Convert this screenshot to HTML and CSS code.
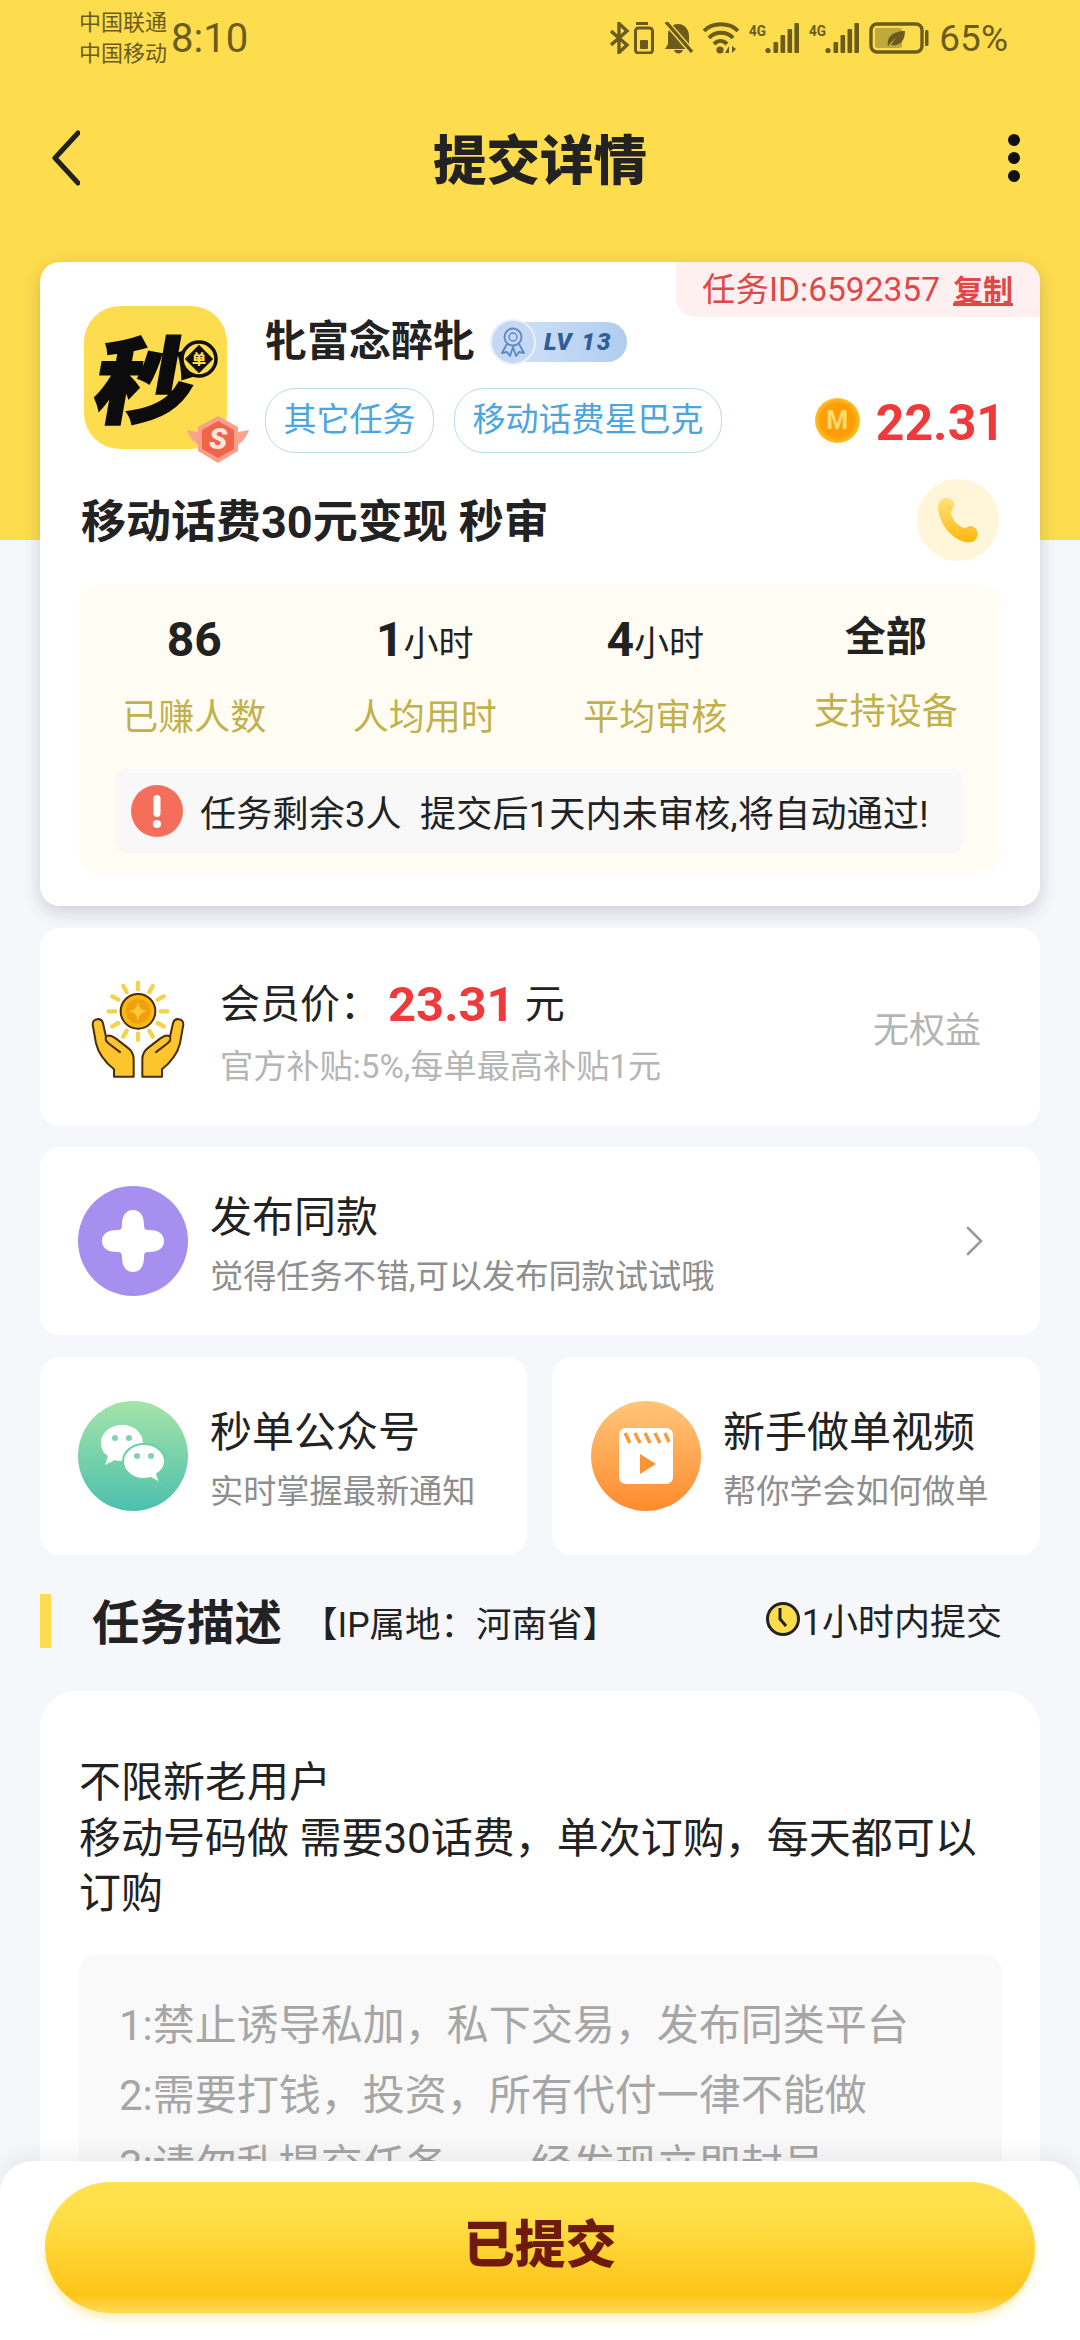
FILE: index.html
```html
<!DOCTYPE html>
<html lang="zh-CN">
<head>
  <meta charset="UTF-8">
  <meta name="viewport" content="width=device-width, initial-scale=1.0">
  <title>提交详情</title>
  <link rel="stylesheet" href="styles.css">
</head>
<body>
<div class="page">

  <!-- status bar -->
  <div class="status-bar">
    <div class="carriers"><div>中国联通</div><div>中国移动</div></div>
    <div class="clock">8:10</div>
    <div class="status-icons">
      <svg width="44" height="32" viewBox="0 0 44 32">
        <path d="M1 9 L17 23 L9 30.5 V1.5 L17 9 L1 23" fill="none" stroke="#6b5c1e" stroke-width="3.4"/>
        <rect x="26" y="0" width="12" height="3" fill="#6b5c1e"/>
        <rect x="25.5" y="6" width="17" height="25" rx="3" fill="none" stroke="#6b5c1e" stroke-width="3"/>
        <rect x="30" y="18" width="8" height="9" rx="1" fill="#6b5c1e"/>
      </svg>
      <svg width="29" height="32" viewBox="0 0 29 32">
        <path d="M14 2 C22 2 25 9 25 14 V22 L28 27 H1 L4 22 V13 C4 8 7 2 14 2 Z" fill="#6b5c1e"/>
        <path d="M10 28 H19 C18 32.5 11 32.5 10 28 Z" fill="#6b5c1e"/>
        <path d="M2 0 L28 30" stroke="#fddc4e" stroke-width="6"/>
        <path d="M2 0 L28 30" stroke="#6b5c1e" stroke-width="3.4"/>
      </svg>
      <svg width="36" height="32" viewBox="0 0 36 32">
        <path d="M1 9 C9 0 27 0 35 9 M6 16 C12 9 24 9 30 16 M11 22 C15 18 20 18 24 22" fill="none" stroke="#6b5c1e" stroke-width="4"/>
        <circle cx="17" cy="28" r="3.6" fill="#6b5c1e"/>
        <path d="M26 24 V31 L22 31 Z M29 24 V31 L33 27 Z" fill="#6b5c1e"/>
      </svg>
      <svg class="signal" width="50" height="32" viewBox="0 0 50 32">
        <text x="0" y="14" textLength="17" lengthAdjust="spacingAndGlyphs">4G</text>
        <circle cx="19" cy="28.5" r="2.6" fill="#6b5c1e"/>
        <rect x="24.5" y="20" width="4.6" height="11" rx="1" fill="#6b5c1e"/>
        <rect x="31.5" y="13" width="4.6" height="18" rx="1" fill="#6b5c1e"/>
        <rect x="38.5" y="7" width="4.6" height="24" rx="1" fill="#6b5c1e"/>
        <rect x="45.4" y="1" width="4.6" height="30" rx="1" fill="#6b5c1e"/>
      </svg>
      <svg class="signal" width="50" height="32" viewBox="0 0 50 32">
        <text x="0" y="14" textLength="17" lengthAdjust="spacingAndGlyphs">4G</text>
        <circle cx="19" cy="28.5" r="2.6" fill="#6b5c1e"/>
        <rect x="24.5" y="20" width="4.6" height="11" rx="1" fill="#6b5c1e"/>
        <rect x="31.5" y="13" width="4.6" height="18" rx="1" fill="#6b5c1e"/>
        <rect x="38.5" y="7" width="4.6" height="24" rx="1" fill="#6b5c1e"/>
        <rect x="45.4" y="1" width="4.6" height="30" rx="1" fill="#6b5c1e"/>
      </svg>
      <svg width="60" height="32" viewBox="0 0 60 32">
        <rect x="2" y="2" width="51" height="28" rx="6" fill="none" stroke="#6b5c1e" stroke-width="3.4"/>
        <rect x="6" y="6" width="27" height="20" rx="2" fill="#bfa93c"/>
        <path d="M19 24 C17 14 26 9 36 9 C36 19 30 25 22 23 L27 15 Z" fill="#6b5c1e"/>
        <rect x="56" y="8" width="3.5" height="16" rx="1.5" fill="#6b5c1e"/>
      </svg>
      <span class="battery-text">65%</span>
    </div>
  </div>

  <!-- nav -->
  <div class="nav">
    <svg class="nav-back" width="28" height="56" viewBox="0 0 28 56">
      <path d="M26 3 L3 28 L26 53" fill="none" stroke="#222" stroke-width="5" stroke-linecap="round" stroke-linejoin="round"/>
    </svg>
    <h1 class="nav-title">提交详情</h1>
    <div class="nav-more"><i></i><i></i><i></i></div>
  </div>

  <!-- task card -->
  <div class="task-card">
    <div class="task-id">任务ID:6592357<u>复制</u></div>

    <div class="task-head">
      <div class="logo">
        <svg width="143" height="143" viewBox="0 0 143 143">
          <text class="logo-char" x="0" y="0" transform="translate(6 110) skewX(-10) scale(.86 .8)">秒</text>
          <circle cx="115" cy="53" r="17" fill="#fddc4e" stroke="#111" stroke-width="3.5"/>
          <rect x="105" y="43" width="20" height="20" transform="rotate(45 115 53)" fill="#111"/>
          <text class="logo-dan" x="115" y="58">单</text>
        </svg>
        <svg class="logo-badge" width="62" height="47" viewBox="0 0 62 47">
          <path d="M0 14 L16 17 V30 C8 29 3 22 0 14 Z M62 14 L46 17 V30 C54 29 59 22 62 14 Z" fill="#f8a48e"/>
          <path d="M31 0 L51 11 V35 L31 47 L11 35 V11 Z" fill="#f9a08a"/>
          <path d="M31 5 L47 14 V33 L31 42 L15 33 V14 Z" fill="#f0644a"/>
          <text x="31" y="33">S</text>
        </svg>
      </div>
      <div class="task-info">
        <div class="name-row">
          <span class="name">牝富念醉牝</span>
          <span class="level">
            <span class="level-icon">
              <svg width="28" height="30" viewBox="0 0 28 30">
                <circle cx="14" cy="10" r="8.5" fill="none" stroke="#5d88c2" stroke-width="1.8"/>
                <circle cx="14" cy="10" r="4" fill="none" stroke="#5d88c2" stroke-width="1.4"/>
                <path d="M8 17 L3 26 L8 25 L11 29 L14 20 L17 29 L20 25 L25 26 L20 17" fill="none" stroke="#5d88c2" stroke-width="1.8" stroke-linejoin="round"/>
              </svg>
            </span>
            <span class="level-text">LV 13</span>
          </span>
        </div>
        <div class="tags-row">
          <span class="tag">其它任务</span>
          <span class="tag">移动话费星巴克</span>
          <span class="reward">
            <span class="coin">M</span>
            <span class="reward-num">22.31</span>
          </span>
        </div>
      </div>
    </div>

    <div class="title-row">
      <div class="task-title">移动话费30元变现 秒审</div>
      <div class="phone-btn">
        <svg width="42" height="48" viewBox="0 0 42 48">
          <defs>
            <linearGradient id="phoneFill" x1="0" y1="0" x2="0" y2="1">
              <stop offset="0" stop-color="#ffe27a"/>
              <stop offset="1" stop-color="#fdb70d"/>
            </linearGradient>
          </defs>
          <path d="M8 2 C13 1 17 4 17 9 C17 13 14 14 14 17 C15 24 21 30 27 32 C30 32 31 30 34 30 C39 31 42 36 40 41 C38 46 33 47 28 46 C14 42 3 29 1 12 C1 7 3 3 8 2 Z" fill="url(#phoneFill)"/>
        </svg>
      </div>
    </div>

    <div class="stats">
      <div class="stats-grid">
        <div class="stat">
          <div class="stat-value">86</div>
          <div class="stat-label">已赚人数</div>
        </div>
        <div class="stat">
          <div class="stat-value">1<small>小时</small></div>
          <div class="stat-label">人均用时</div>
        </div>
        <div class="stat">
          <div class="stat-value">4<small>小时</small></div>
          <div class="stat-label">平均审核</div>
        </div>
        <div class="stat stat-device">
          <div class="stat-value">全部</div>
          <div class="stat-label">支持设备</div>
        </div>
      </div>
      <div class="notice">
        <svg width="52" height="52" viewBox="0 0 52 52">
          <circle cx="26" cy="26" r="26" fill="#f56e5b"/>
          <rect x="22.5" y="10" width="7" height="22" rx="3.5" fill="#fff"/>
          <circle cx="26" cy="39" r="4" fill="#fff"/>
        </svg>
        <span>任务剩余3人&nbsp;&nbsp;提交后1天内未审核,将自动通过!</span>
      </div>
    </div>
  </div>

  <!-- member price -->
  <div class="card member-card">
    <svg class="member-icon" width="150" height="130" viewBox="0 0 450 390">
      <g stroke="#f3d34e" stroke-width="13" stroke-linecap="round">
        <path d="M204 62 V82 M160 72 L170 90 M248 72 L238 90 M127 103 L145 113 M281 103 L263 113 M116 148 H136 M292 148 H272 M127 193 L145 183 M281 193 L263 183 M160 224 L170 206 M248 224 L238 206 M204 234 V214"/>
      </g>
      <circle cx="204" cy="148" r="52" fill="#f9b715" stroke="#4a2c05" stroke-width="6"/>
      <circle cx="204" cy="148" r="37" fill="#f0a00c"/>
      <path d="M204 120 C208 138 214 144 232 148 C214 152 208 158 204 176 C200 158 194 152 176 148 C194 144 200 138 204 120 Z" fill="#fbc83a"/>
      <g fill="#fcc52e" stroke="#4a2c05" stroke-width="6" stroke-linejoin="round">
        <path d="M68 188 C66 170 94 164 99 184 L108 224 C116 216 130 224 137 229 L172 256 C186 266 191 276 191 292 V344 H132 V322 C102 298 84 270 78 244 Z"/>
        <path d="M108 224 C104 232 110 240 118 246 L152 272" fill="none"/>
      </g>
      <g fill="#fcc52e" stroke="#4a2c05" stroke-width="6" stroke-linejoin="round" transform="translate(408 0) scale(-1 1)">
        <path d="M68 188 C66 170 94 164 99 184 L108 224 C116 216 130 224 137 229 L172 256 C186 266 191 276 191 292 V344 H132 V322 C102 298 84 270 78 244 Z"/>
        <path d="M108 224 C104 232 110 240 118 246 L152 272" fill="none"/>
      </g>
    </svg>
    <div class="member-text">
      <div class="member-price">会员价：<b>23.31</b><span>元</span></div>
      <div class="member-sub">官方补贴:5%,每单最高补贴1元</div>
    </div>
    <div class="member-right">无权益</div>
  </div>

  <!-- publish same -->
  <div class="card link-card">
    <div class="round-icon icon-purple">
      <svg width="68" height="68" viewBox="0 0 68 68">
        <path d="M34 3 C42 3 45 10 45 18 C45 22 46 23 50 23 C58 23 65 26 65 34 C65 42 58 45 50 45 C46 45 45 46 45 50 C45 58 42 65 34 65 C26 65 23 58 23 50 C23 46 22 45 18 45 C10 45 3 42 3 34 C3 26 10 23 18 23 C22 23 23 22 23 18 C23 10 26 3 34 3 Z" fill="#fff"/>
      </svg>
    </div>
    <div class="link-text">
      <div class="link-title">发布同款</div>
      <div class="link-sub">觉得任务不错,可以发布同款试试哦</div>
    </div>
    <svg class="link-arrow" width="18" height="30" viewBox="0 0 18 30">
      <path d="M2 2 L15 15 L2 28" fill="none" stroke="#9a9a9a" stroke-width="2.6" stroke-linecap="round"/>
    </svg>
  </div>

  <div class="two-cards">
    <div class="card link-card">
      <div class="round-icon icon-green">
        <svg width="66" height="66" viewBox="0 0 66 66">
          <path d="M22 2 C34 2 43 10 43 20 C43 30 34 38 22 38 C19 38 17 38 15 37 L5 42 L8 33 C3 30 1 25 1 20 C1 10 10 2 22 2 Z" fill="#fff"/>
          <path d="M44 21 C56 21 65 29 65 38 C65 44 62 48 57 51 L60 60 L51 55 C49 55 46 56 44 56 C32 56 23 48 23 38 C23 29 32 21 44 21 Z" fill="#fff" stroke="#6fd0a8" stroke-width="2"/>
          <circle cx="15" cy="15" r="3" fill="#7fd3ac"/>
          <circle cx="29" cy="15" r="3" fill="#7fd3ac"/>
          <circle cx="37" cy="33" r="3" fill="#7fd3ac"/>
          <circle cx="51" cy="33" r="3" fill="#7fd3ac"/>
        </svg>
      </div>
      <div class="link-text">
        <div class="link-title">秒单公众号</div>
        <div class="link-sub">实时掌握最新通知</div>
      </div>
    </div>
    <div class="card link-card link-card-video">
      <div class="round-icon icon-orange">
        <svg width="54" height="56" viewBox="0 0 54 56">
          <path d="M7 0 H47 C51 0 54 3 54 7 V49 C54 53 51 56 47 56 H7 C3 56 0 53 0 49 V7 C0 3 3 0 7 0 Z" fill="#fff"/>
          <path d="M6 5 L11 15 M16 5 L21 15 M26 5 L31 15 M36 5 L41 15 M46 5 L50 14" stroke="#fb9a3a" stroke-width="3.5"/>
          <path d="M21 26 L37 36 L21 46 Z" fill="#fb9437"/>
        </svg>
      </div>
      <div class="link-text">
        <div class="link-title">新手做单视频</div>
        <div class="link-sub">帮你学会如何做单</div>
      </div>
    </div>
  </div>

  <!-- description -->
  <div class="section-head">
    <div class="section-title">任务描述</div>
    <div class="section-ip">【IP属地：河南省】</div>
    <div class="section-time">
      <svg width="34" height="36" viewBox="0 0 34 36">
        <circle cx="17" cy="18" r="15.5" fill="#fddc4e" stroke="#222" stroke-width="3"/>
        <path d="M14 7 V18 L20 25" fill="none" stroke="#222" stroke-width="3"/>
      </svg>
      1小时内提交
    </div>
  </div>

  <div class="desc-card">
    <div class="desc-text">不限新老用户<br>移动号码做 需要30话费，单次订购，每天都可以订购</div>
    <div class="rules">
      <div>1:禁止诱导私加，私下交易，发布同类平台</div>
      <div>2:需要打钱，投资，所有代付一律不能做</div>
      <div>3:请勿乱提交任务，一经发现立即封号</div>
    </div>
  </div>

  <div class="footer">
    <div class="submit-btn">已提交</div>
  </div>
</div>
</body>
</html>
```

FILE: styles.css
```css
* {
  box-sizing: border-box;
}

body {
  margin: 0;
  font-family: Roboto, "Noto Sans CJK SC", sans-serif;
  color: #222;
}

.page {
  position: relative;
  width: 1080px;
  height: 2340px;
  overflow: hidden;
  background: linear-gradient(#fddc4e 540px, #f5f7fb 540px);
}

/* status bar */
.status-bar {
  display: flex;
  align-items: center;
  height: 76px;
  padding: 0 72px 0 79px;
  color: #6b5c1e;
}

.carriers {
  font-size: 22px;
  line-height: 31px;
}

.clock {
  margin-left: 4px;
  font-size: 40px;
}

.status-icons {
  display: flex;
  align-items: center;
  gap: 10px;
  margin-left: auto;
}

.signal text {
  font-size: 15px;
  font-weight: 700;
  fill: #6b5c1e;
}

.battery-text {
  font-size: 37px;
}

/* nav */
.nav {
  display: grid;
  grid-template-columns: 1fr auto 1fr;
  align-items: center;
  height: 164px;
  margin-bottom: 22px;
  padding: 0 52px;
}

.nav-title {
  margin: 0;
  padding-bottom: 4px;
  font-size: 53.5px;
  font-weight: 900;
}

.nav-more {
  display: flex;
  flex-direction: column;
  gap: 6px;
  justify-self: end;
  margin-right: 8px;
}

.nav-more i {
  width: 12px;
  height: 12px;
  border-radius: 50%;
  background: #111;
}

/* task card */
.task-card {
  position: relative;
  height: 644px;
  margin: 0 40px;
  padding: 44px 39px 0;
  background: #fff;
  border-radius: 20px;
  box-shadow: 0 6px 18px rgba(50, 50, 70, 0.2);
}

.task-id {
  position: absolute;
  top: 0;
  right: 0;
  height: 55px;
  padding: 0 27px 0 26px;
  font-size: 33.5px;
  line-height: 55px;
  color: #e04848;
  background: #fef0f0;
  border-radius: 0 20px 0 20px;
}

.task-id u {
  margin-left: 13px;
  font-size: 30px;
  font-weight: 700;
}

.task-head {
  display: flex;
  padding-left: 5px;
}

.logo {
  position: relative;
  flex: none;
  width: 143px;
  height: 143px;
  background: #fddc4e;
  border-radius: 36px;
}

.logo svg {
  display: block;
}

.logo-char {
  font-size: 118px;
  font-weight: 900;
  fill: #0c0c0c;
  stroke: #0c0c0c;
  stroke-width: 2px;
}

.logo-dan {
  font-size: 14px;
  font-weight: 900;
  text-anchor: middle;
  fill: #fddc4e;
}

.logo-badge {
  position: absolute;
  right: -22px;
  bottom: -14px;
}

.logo-badge text {
  font-size: 30px;
  font-weight: 900;
  font-style: italic;
  text-anchor: middle;
  fill: #fde6dc;
}

.task-info {
  flex: 1;
  margin-left: 38px;
}

.name-row {
  display: flex;
  align-items: center;
  height: 46px;
  margin-top: 13px;
}

.name {
  font-size: 42px;
  font-weight: 700;
  line-height: 46px;
}

.level {
  position: relative;
  display: flex;
  align-items: center;
  width: 137px;
  height: 40px;
  margin-left: 15px;
  padding-left: 54px;
  background: linear-gradient(90deg, #d6e4f7, #afcdf0);
  border-radius: 20px;
}

.level-icon {
  position: absolute;
  top: -3px;
  left: 0;
  display: flex;
  align-items: center;
  justify-content: center;
  width: 46px;
  height: 46px;
  background: #c5d8f4;
  border: 2px solid #e9f0fb;
  border-radius: 50%;
}

.level-text {
  font-size: 24px;
  font-weight: 900;
  font-style: italic;
  letter-spacing: 2px;
  white-space: nowrap;
  color: #2e5f96;
}

.tags-row {
  display: flex;
  align-items: center;
  gap: 20px;
  margin-top: 23px;
}

.tag {
  height: 65px;
  padding: 0 17.5px;
  font-size: 33px;
  line-height: 61px;
  color: #4ca5e0;
  border: 1px solid #bcd9ec;
  border-radius: 30px;
}

.reward {
  display: flex;
  align-items: center;
  gap: 16px;
  margin: 0 -4px 0 auto;
}

.coin {
  width: 45px;
  height: 45px;
  font-size: 25px;
  font-weight: 700;
  line-height: 45px;
  text-align: center;
  color: #ffdb70;
  background: radial-gradient(circle, #ff9d08 52%, #fcc525 72%);
  border-radius: 50%;
}

.reward-num {
  padding-top: 4px;
  font-size: 50px;
  font-weight: 700;
  line-height: 60px;
  color: #ee3a3a;
}

.title-row {
  display: flex;
  align-items: center;
  justify-content: space-between;
  margin-top: 26px;
  padding: 0 2px;
}

.task-title {
  padding-bottom: 4px;
  font-size: 45px;
  font-weight: 700;
}

.phone-btn {
  display: flex;
  align-items: center;
  justify-content: center;
  width: 82px;
  height: 82px;
  background: #fff5d9;
  border-radius: 50%;
}

/* stats */
.stats {
  height: 289px;
  margin-top: 24px;
  padding-top: 25px;
  background: #fffdf3;
  border-radius: 20px;
}

.stats-grid {
  display: grid;
  grid-template-columns: repeat(4, 1fr);
  text-align: center;
}

.stat-value {
  height: 60px;
  font-size: 48px;
  font-weight: 700;
  line-height: 60px;
}

.stat-value small {
  font-size: 35px;
  font-weight: 400;
}

.stat-label {
  margin-top: 28px;
  font-size: 36px;
  line-height: 40px;
  color: #c2b04a;
}

.stat-device .stat-value {
  margin-top: -3px;
  font-size: 41px;
}

.stat-device .stat-label {
  margin-top: 25px;
}

.notice {
  display: flex;
  align-items: center;
  gap: 17px;
  height: 84px;
  margin: 31px 38px 0 36px;
  padding-left: 16px;
  font-size: 36px;
  letter-spacing: 0.25px;
  background: #f8f8f8;
  border-radius: 12px;
}

/* cards below the task card */
.card {
  background: #fff;
  border-radius: 20px;
}

.member-card {
  display: flex;
  align-items: center;
  height: 198px;
  margin: 22px 40px 0;
  padding: 0 59px 0 30px;
}

.member-price {
  display: flex;
  align-items: center;
  height: 60px;
  font-size: 40px;
  line-height: 60px;
}

.member-price b {
  margin: 0 10px 0 8px;
  font-size: 49px;
  color: #ee3a3a;
}

.member-sub {
  margin-top: 12px;
  font-size: 33.2px;
  line-height: 40px;
  color: #b5b5b5;
}

.member-text {
  margin-top: 8px;
}

.member-right {
  margin-left: auto;
  font-size: 36px;
  color: #b4b4b4;
}

.link-card {
  display: flex;
  align-items: center;
  height: 188px;
  margin: 21px 40px 0;
  padding: 0 56px 0 38px;
}

.round-icon {
  display: flex;
  flex: none;
  align-items: center;
  justify-content: center;
  width: 110px;
  height: 110px;
  border-radius: 50%;
}

.icon-purple {
  background: #a78ff0;
}

.icon-green {
  background: linear-gradient(#a5e4a8, #4cc0ae);
}

.icon-orange {
  background: linear-gradient(#ffc679, #ff8a2f);
}

.link-text {
  margin-left: 22px;
  padding-top: 8px;
}

.link-title {
  font-size: 42px;
  line-height: 50px;
}

.link-sub {
  margin-top: 14px;
  font-size: 33.2px;
  line-height: 40px;
  color: #8e8e8e;
}

.link-arrow {
  margin-left: auto;
}

.two-cards {
  display: grid;
  grid-template-columns: 487px 488px;
  gap: 25px;
  margin: 22px 40px 0;
}

.two-cards .link-card {
  height: 198px;
  margin: 0;
  padding-right: 0;
}

.two-cards .link-card-video {
  padding-left: 39px;
}

/* description */
.section-head {
  display: flex;
  align-items: center;
  height: 54px;
  margin: 39px 40px 0;
  padding-left: 41px;
  border-left: 11px solid #fddc4e;
}

.section-title {
  padding-bottom: 4px;
  font-size: 47.5px;
  font-weight: 700;
}

.section-ip {
  margin-left: 20px;
  font-size: 35.5px;
}

.section-time {
  display: flex;
  align-items: center;
  gap: 2px;
  margin-left: auto;
  padding: 0 38px 4px 0;
  font-size: 36px;
}

.desc-card {
  height: 800px;
  margin: 43px 40px 0;
  padding: 64px 38px 0 39px;
  background: #fff;
  border-radius: 36px;
}

.desc-text {
  font-size: 42px;
  line-height: 55.5px;
}

.rules {
  height: 400px;
  margin-top: 33px;
  padding: 36px 40px 0;
  font-size: 42px;
  line-height: 70px;
  color: #a6a6a6;
  background: #f9f9f9;
  border-radius: 16px;
}

/* bottom button */
.footer {
  position: absolute;
  left: 0;
  right: 0;
  bottom: 0;
  height: 179px;
  padding: 21px 45px 0;
  background: #fff;
  border-radius: 32px 32px 0 0;
  box-shadow: 0 -8px 20px rgba(0, 0, 0, 0.06);
}

.submit-btn {
  height: 131px;
  font-size: 51px;
  font-weight: 900;
  line-height: 128px;
  text-align: center;
  color: #6e1a0e;
  background: linear-gradient(#ffe24f, #ffdf48 25%, #ffc418 86%, #ffd84f 98%);
  border-radius: 66px;
  box-shadow: 0 6px 10px rgba(255, 214, 90, 0.4);
}
```
